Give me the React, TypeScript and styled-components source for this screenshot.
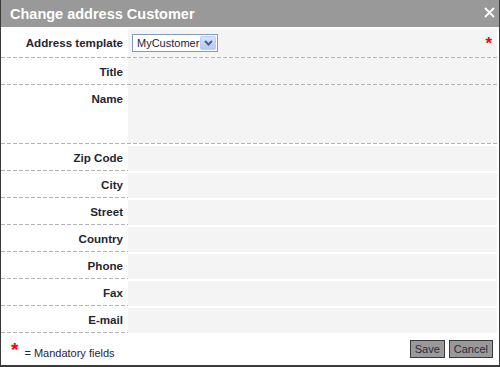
import styled, { createGlobalStyle } from 'styled-components'

const GlobalStyle = createGlobalStyle`
  html, body {
    margin: 0;
    padding: 0;
    background: #ffffff;
  }
  body {
    font-family: 'Liberation Sans', Arial, sans-serif;
  }
  * {
    box-sizing: border-box;
  }
`

const dashed = `repeating-linear-gradient(to right, #b2b2b8 0 4px, transparent 4px 6px)`

const S = {
  Dialog: styled.div`
    width: 500px;
    height: 367px;
    display: flex;
    flex-direction: column;
    background: #ffffff;
    border-left: 1px solid #3a3a3a;
    border-right: 1px solid #3a3a3a;
    border-bottom: 2px solid #3a3a3a;
  `,
  TitleBar: styled.div`
    height: 27px;
    flex: none;
    display: flex;
    align-items: center;
    justify-content: space-between;
    padding: 0 4px 0 9px;
    background: #999999;
    color: #ffffff;
    font-size: 14.5px;
    font-weight: bold;
  `,
  Close: styled.svg`
    width: 11px;
    height: 11px;
    margin-bottom: 2px;
  `,
  Body: styled.div`
    flex: 1;
    display: flex;
    flex-direction: column;
    padding: 2px 2px 0 0;
  `,
  Row: styled.div<{ $height: number }>`
    display: grid;
    grid-template-columns: 127px 1fr;
    height: ${({ $height }) => $height}px;
    padding-bottom: 1px;
    background: ${dashed} left bottom / 100% 1px no-repeat;
  `,
  SplitRow: styled.div`
    display: grid;
    grid-template-columns: 127px 1fr;
    height: 27px;
  `,
  Label: styled.div<{ $dashed?: boolean }>`
    padding: 6px 5px 0 0;
    text-align: right;
    font-size: 11.6px;
    font-weight: bold;
    line-height: 16px;
    color: #262630;
    background: ${({ $dashed }) => ($dashed ? `${dashed} left bottom / 100% 1px no-repeat` : 'none')};
  `,
  Value: styled.div`
    display: flex;
    align-items: flex-start;
    justify-content: space-between;
    background: #f4f4f4;
    padding: 5px 5px 0 4px;
  `,
  FieldCell: styled.div`
    padding-top: 2px;
    display: flex;
  `,
  Field: styled.div`
    flex: 1;
    background: #f4f4f4;
  `,
  Select: styled.div`
    width: 86px;
    height: 18px;
    display: flex;
    align-items: center;
    justify-content: space-between;
    padding: 0 1px 0 4px;
    background: #ffffff;
    border: 1px solid #7f9db9;
    font-size: 11px;
    color: #1e1e3c;
  `,
  SelectButton: styled.div`
    width: 16px;
    height: 14px;
    display: flex;
    align-items: center;
    justify-content: center;
    border: 1px solid #b9cdf6;
    border-radius: 2px;
    background: linear-gradient(#d6e3fd, #b4c9f6);
  `,
  Required: styled.span`
    margin-top: 4px;
    font-size: 17px;
    font-weight: bold;
    line-height: 12px;
    color: #ff0000;
  `,
  Footer: styled.div`
    flex: 1;
    display: flex;
    align-items: center;
    justify-content: space-between;
    padding: 0 4px 0 10px;
  `,
  Legend: styled.div`
    display: flex;
    align-items: center;
    gap: 6px;
    padding-top: 8px;
    font-size: 11px;
    color: #262640;
  `,
  LegendStar: styled.span`
    margin-top: -6px;
    font-size: 19px;
    font-weight: bold;
    line-height: 12px;
    color: #ff0000;
  `,
  Buttons: styled.div`
    display: flex;
    gap: 4px;
    margin-bottom: 1px;
  `,
  Button: styled.button`
    height: 18px;
    padding: 0 4px;
    background: #999999;
    border: 1px solid #3a3a3a;
    border-radius: 0;
    font-family: 'Liberation Sans', Arial, sans-serif;
    font-size: 11px;
    color: #2a2a44;
  `,
}

const lowerFields = ['Zip Code', 'City', 'Street', 'Country', 'Phone', 'Fax', 'E-mail']

export default function App() {
  return (
    <>
      <GlobalStyle />
      <S.Dialog>
        <S.TitleBar>
          Change address Customer
          <S.Close viewBox="0 0 11 11">
            <path d="M1 1 L10 10 M10 1 L1 10" stroke="#ffffff" strokeWidth="1.8" />
          </S.Close>
        </S.TitleBar>
        <S.Body>
          <S.Row $height={29}>
            <S.Label>Address template</S.Label>
            <S.Value>
              <S.Select>
                MyCustomer
                <S.SelectButton>
                  <svg width="9" height="6" viewBox="0 0 9 6">
                    <path d="M1 1 L4.5 4.5 L8 1" stroke="#4d6185" strokeWidth="2" fill="none" />
                  </svg>
                </S.SelectButton>
              </S.Select>
              <S.Required>*</S.Required>
            </S.Value>
          </S.Row>
          <S.Row $height={27}>
            <S.Label>Title</S.Label>
            <S.Field />
          </S.Row>
          <S.Row $height={59}>
            <S.Label>Name</S.Label>
            <S.Field />
          </S.Row>
          {lowerFields.map((label) => (
            <S.SplitRow key={label}>
              <S.Label $dashed>{label}</S.Label>
              <S.FieldCell>
                <S.Field />
              </S.FieldCell>
            </S.SplitRow>
          ))}
          <S.Footer>
            <S.Legend>
              <S.LegendStar>*</S.LegendStar>= Mandatory fields
            </S.Legend>
            <S.Buttons>
              <S.Button>Save</S.Button>
              <S.Button>Cancel</S.Button>
            </S.Buttons>
          </S.Footer>
        </S.Body>
      </S.Dialog>
    </>
  )
}
